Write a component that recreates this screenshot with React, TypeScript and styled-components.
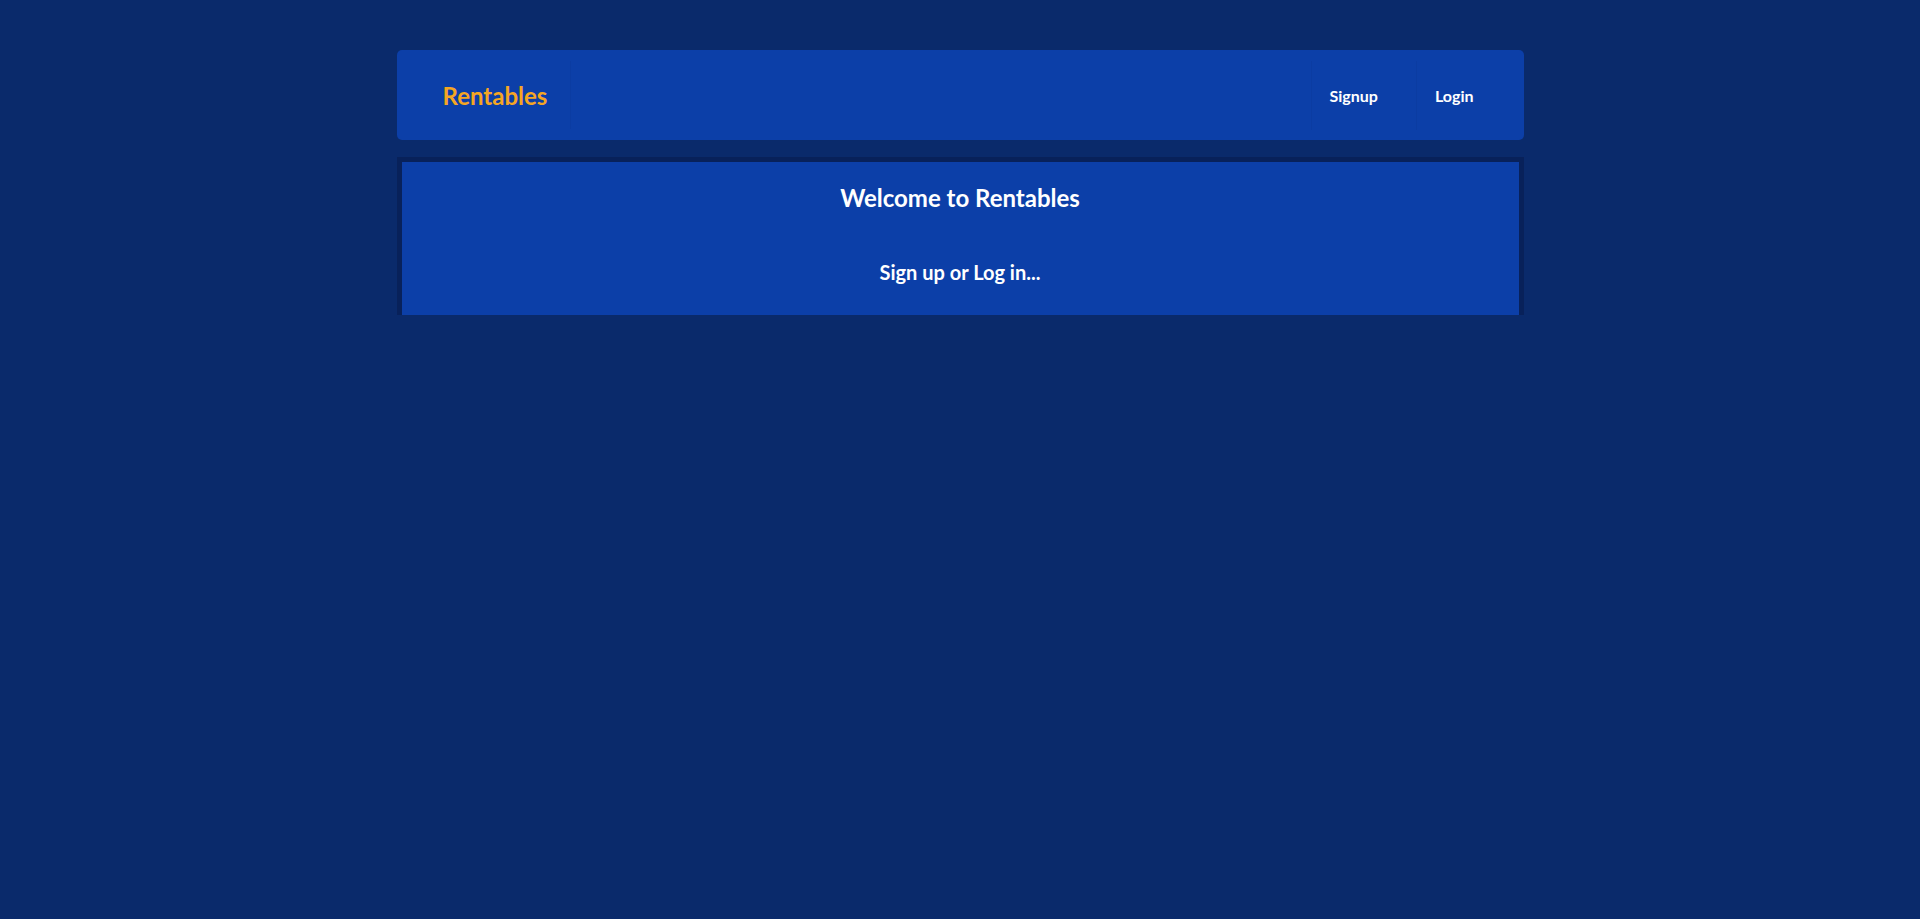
import React from "react";
import styled, { createGlobalStyle } from "styled-components";

const GlobalStyle = createGlobalStyle`
  html, body {
    margin: 0;
    padding: 0;
    background-color: #0a2a6b;
    font-family: Lato, "Open Sans", sans-serif;
    color: #ffffff;
  }
  #root {
    min-height: 100vh;
  }
`;

const Page = styled.div`
  width: 1127px;
  margin: 0 auto;
  padding-top: 50px;
`;

const Header = styled.nav`
  height: 90px;
  display: flex;
  align-items: center;
  background-color: #0c3fa8;
  border-radius: 5px;
  padding: 0 31px 0 18px;
  box-sizing: border-box;
`;

const Item = styled.a<{ $divider?: "left" | "right" }>`
  position: relative;
  display: flex;
  align-items: center;
  height: 68px;
  padding: 0 19px;
  color: #ffffff;
  font-weight: 700;
  font-size: 16px;
  text-decoration: none;
  cursor: pointer;
  &::after {
    content: "";
    position: absolute;
    ${({ $divider }) => ($divider === "right" ? "right: 0;" : "left: 0;")}
    top: 0;
    bottom: 0;
    width: 1px;
    background: rgba(0, 0, 0, 0.035);
  }
`;

const Logo = styled(Item)`
  color: #f5a623;
  font-size: 24px;
  padding: 0 24px 0 28px;
`;

const Right = styled.div`
  margin-left: auto;
  display: flex;
  align-items: center;
`;

const NavLink = styled(Item)<{ $wide?: boolean }>`
  padding-top: 1px;
  padding-right: ${({ $wide }) => ($wide ? "38px" : "19px")};
`;

const Panel = styled.section`
  margin-top: 17px;
  background-color: #08215a;
  padding: 5px 5px 0;
`;

const Inner = styled.div`
  background-color: #0c3fa8;
  text-align: center;
  padding: 22px 0 31px;
`;

const Title = styled.h2`
  margin: 0;
  font-size: 24px;
  font-weight: 700;
  line-height: 1.2;
`;

const Sub = styled.h3`
  margin: 47px 0 0;
  font-size: 20px;
  font-weight: 700;
  line-height: 1.2;
`;

export default function App() {
  return (
    <>
      <GlobalStyle />
      <Page>
        <Header>
          <Logo $divider="right">Rentables</Logo>
          <Right>
            <NavLink $divider="left" $wide>
              Signup
            </NavLink>
            <NavLink $divider="left">Login</NavLink>
          </Right>
        </Header>
        <Panel>
          <Inner>
            <Title>Welcome to Rentables</Title>
            <Sub>Sign up or Log in...</Sub>
          </Inner>
        </Panel>
      </Page>
    </>
  );
}
